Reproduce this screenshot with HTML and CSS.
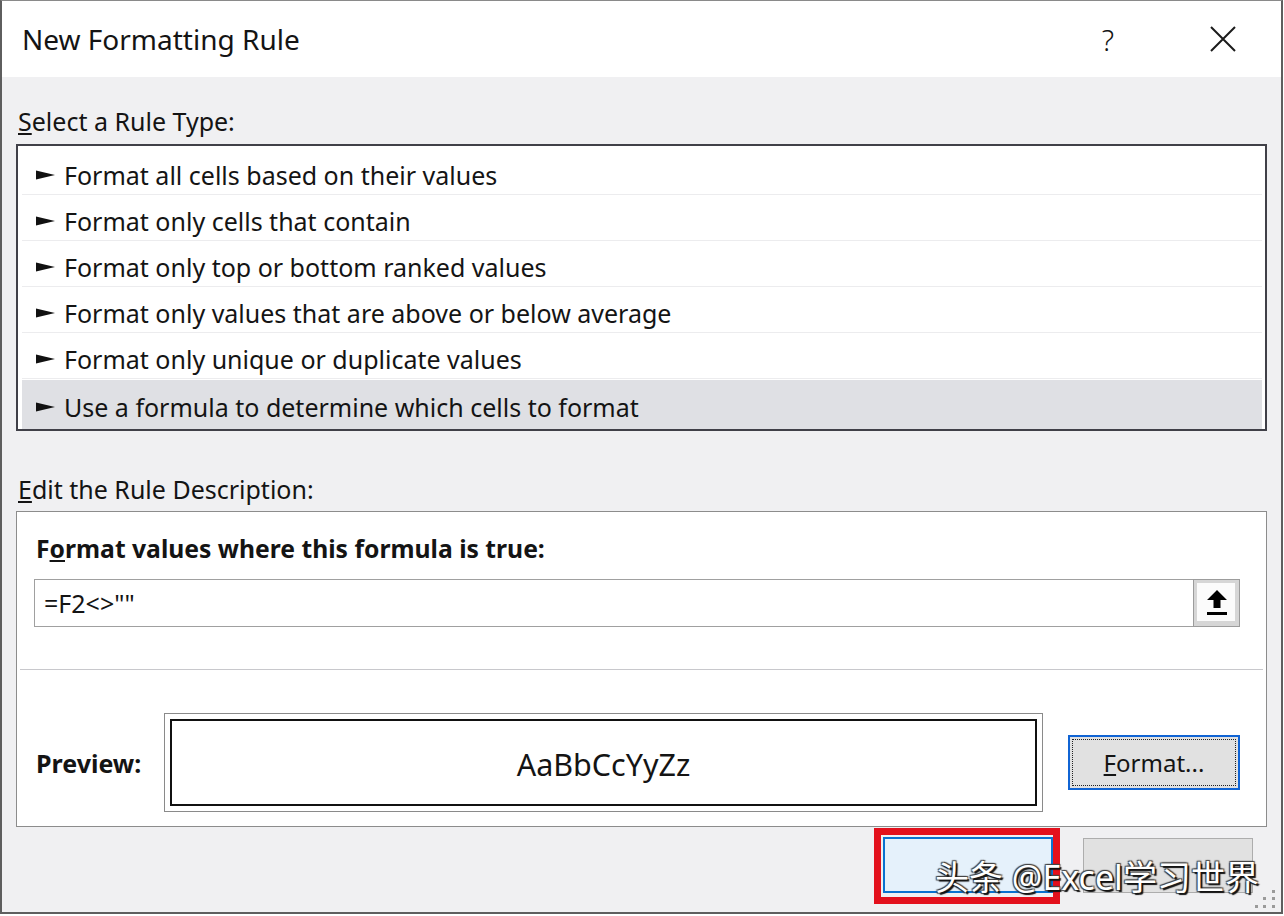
FILE: index.html
```html
<!DOCTYPE html>
<html lang="en">
<head>
  <meta charset="UTF-8">
  <title>New Formatting Rule</title>
  <link rel="stylesheet" href="styles.css">
</head>
<body>
  <div class="dialog">
    <!-- Title bar -->
    <div class="titlebar">
      <span class="title">New Formatting Rule</span>
      <span class="help">?</span>
      <span class="close">
        <svg width="26" height="26" viewBox="0 0 26 26"><path d="M1 1 L25 25 M25 1 L1 25" stroke="#1b1b1b" stroke-width="2" fill="none"/></svg>
      </span>
    </div>

    <div class="content">
      <div class="label select-label"><u>S</u>elect a Rule Type:</div>

      <!-- Rule types -->
      <ul class="rule-list">
        <li><svg class="pointer" width="19" height="10" viewBox="0 0 19 10"><polygon points="0,0.5 19,5 0,9.5"/></svg>Format all cells based on their values</li>
        <li><svg class="pointer" width="19" height="10" viewBox="0 0 19 10"><polygon points="0,0.5 19,5 0,9.5"/></svg>Format only cells that contain</li>
        <li><svg class="pointer" width="19" height="10" viewBox="0 0 19 10"><polygon points="0,0.5 19,5 0,9.5"/></svg>Format only top or bottom ranked values</li>
        <li><svg class="pointer" width="19" height="10" viewBox="0 0 19 10"><polygon points="0,0.5 19,5 0,9.5"/></svg>Format only values that are above or below average</li>
        <li><svg class="pointer" width="19" height="10" viewBox="0 0 19 10"><polygon points="0,0.5 19,5 0,9.5"/></svg>Format only unique or duplicate values</li>
        <li class="selected"><svg class="pointer" width="19" height="10" viewBox="0 0 19 10"><polygon points="0,0.5 19,5 0,9.5"/></svg>Use a formula to determine which cells to format</li>
      </ul>

      <div class="label edit-label"><u>E</u>dit the Rule Description:</div>

      <!-- Rule description -->
      <div class="desc-box">
        <div class="desc-title">F<u>o</u>rmat values where this formula is true:</div>
        <div class="formula-row">
          <div class="formula-input">=F2&lt;&gt;""</div>
          <div class="collapse-btn">
            <svg width="20" height="26" viewBox="0 0 20 26"><polygon points="10,0 20,10 13.5,10 13.5,18 6.5,18 6.5,10 0,10" fill="#000"/><rect x="0" y="22" width="20" height="3" fill="#000"/></svg>
          </div>
        </div>
        <div class="sep"></div>
        <div class="preview-row">
          <div class="preview-label">Preview:</div>
          <div class="preview-box">
            <div class="preview-inner">AaBbCcYyZz</div>
          </div>
          <div class="format-btn">
            <div class="focus-rect"><u>F</u>ormat...</div>
          </div>
        </div>
      </div>

      <!-- Buttons (labels are covered by the watermark) -->
      <div class="footer">
        <div class="btn ok" aria-label="OK"><span class="mark"></span></div>
        <div class="btn cancel" aria-label="Cancel"></div>
      </div>
    </div>

    <div class="watermark">头条 @Excel学习世界</div>
    <svg class="grip" width="40" height="24" viewBox="0 0 40 24">
      <rect x="31" y="2" width="3" height="3" fill="#9a9a9a"/>
      <rect x="22" y="9" width="3" height="3" fill="#9a9a9a"/>
      <rect x="31" y="9" width="3" height="3" fill="#9a9a9a"/>
      <rect x="14" y="17" width="3" height="3" fill="#9a9a9a"/>
      <rect x="22" y="17" width="3" height="3" fill="#9a9a9a"/>
      <rect x="31" y="17" width="3" height="3" fill="#9a9a9a"/>
    </svg>
  </div>
</body>
</html>
```

FILE: styles.css
```css
body {
  margin: 0;
  background-color: #fff;
  font-family: "Noto Sans", "Open Sans", sans-serif;
  color: #141414;
}

.dialog {
  position: relative;
  width: 1283px;
  height: 914px;
  box-sizing: border-box;
  border: 2px solid #5e5e5e;
  border-top: 1px solid #8a8a8a;
  background-color: #f0f0f2;
}

/* Title bar */
.titlebar {
  height: 76px;
  display: flex;
  align-items: center;
  background-color: #fff;
  padding-left: 20px;
}

.title {
  font-size: 28px;
  flex: 1;
}

.help {
  font-size: 29px;
  font-weight: 300;
  margin-right: 96px;
}

.close {
  display: flex;
  margin-right: 45px;
}

.content {
  padding: 0 14px;
}

.label {
  font-size: 25px;
  line-height: 32px;
}

.select-label {
  padding-top: 28px;
  margin-bottom: 7px;
  margin-left: 2px;
}

.edit-label {
  margin-top: 42px;
  margin-bottom: 6px;
  margin-left: 2px;
}

/* Rule type list */
.rule-list {
  list-style: none;
  margin: 0;
  padding: 3px 3px 0 4px;
  height: 287px;
  box-sizing: border-box;
  border: 2px solid #404048;
  background-color: #fff;
}

.rule-list li {
  height: 46px;
  box-sizing: border-box;
  display: flex;
  align-items: center;
  padding: 7px 0 0 14px;
  font-size: 25px;
  border-bottom: 1px solid #ececee;
}

.rule-list li.selected {
  background-color: #dfe0e4;
  border-bottom: none;
  height: 49px;
  margin-top: 1px;
  padding-top: 4px;
}

.pointer {
  margin-right: 9px;
  fill: #111;
}

/* Rule description */
.desc-box {
  height: 316px;
  box-sizing: border-box;
  border: 1px solid #8c8c8c;
  background-color: #fff;
}

.desc-title {
  margin: 21px 0 0 19px;
  font-size: 24.7px;
  line-height: 32px;
  font-weight: bold;
}

.formula-row {
  display: flex;
  margin: 14px 26px 0 17px;
  height: 48px;
}

.formula-input {
  flex: 1;
  border: 1px solid #a0a0a0;
  border-right: none;
  display: flex;
  align-items: center;
  padding-left: 9px;
  font-size: 25px;
}

.collapse-btn {
  width: 47px;
  box-sizing: border-box;
  border: 1px solid #9c9c9c;
  box-shadow: inset 1px 1px 0 2px #d6d6d6, inset -2px -3px 0 2px #d6d6d6;
  background-color: #fbfbfb;
  display: flex;
  align-items: center;
  justify-content: center;
}

.sep {
  height: 1px;
  margin: 42px 3px 0;
  background-color: #c8c8cc;
}

.preview-row {
  display: flex;
  align-items: center;
  margin: 43px 26px 0 19px;
}

.preview-label {
  width: 128px;
  font-size: 25px;
  font-weight: bold;
}

.preview-box {
  width: 879px;
  height: 99px;
  box-sizing: border-box;
  border: 1px solid #8a8a8a;
  padding: 5px;
}

.preview-inner {
  height: 100%;
  box-sizing: border-box;
  border: 2px solid #111;
  display: flex;
  align-items: center;
  justify-content: center;
  font-size: 30.5px;
  padding-top: 2px;
}

.format-btn {
  margin-left: 25px;
  width: 172px;
  height: 55px;
  box-sizing: border-box;
  border: 2px solid #1064d4;
  background-color: #e1e1e1;
  padding: 2px;
}

.focus-rect {
  height: 100%;
  box-sizing: border-box;
  border: 1px dotted #222;
  display: flex;
  align-items: center;
  justify-content: center;
  font-size: 24px;
}

/* Bottom buttons */
.footer {
  display: flex;
  justify-content: flex-end;
  gap: 30px;
  padding: 10px 14px 0 0;
}

.btn {
  position: relative;
  width: 170px;
  height: 56px;
  box-sizing: border-box;
}

.ok {
  border: 2px solid #0a72d0;
  background-color: #e5f1fb;
}

.cancel {
  margin-top: 1px;
  height: 55px;
  border: 1px solid #adadad;
  background-color: #e1e1e1;
}

/* red annotation around OK */
.mark {
  position: absolute;
  left: -11px;
  right: -9px;
  top: -11px;
  bottom: -13px;
  border: 7px solid #e3101c;
}

.watermark {
  position: absolute;
  left: 933px;
  top: 850px;
  font-family: "Noto Sans", "Noto Sans CJK SC", sans-serif;
  font-size: 34px;
  color: #fff;
  text-shadow: 2px 2px 1px #111, -1px -1px 1px #444, 1px -1px 1px #444, -1px 1px 1px #444;
}

.grip {
  position: absolute;
  right: 0;
  bottom: 0;
}
```
